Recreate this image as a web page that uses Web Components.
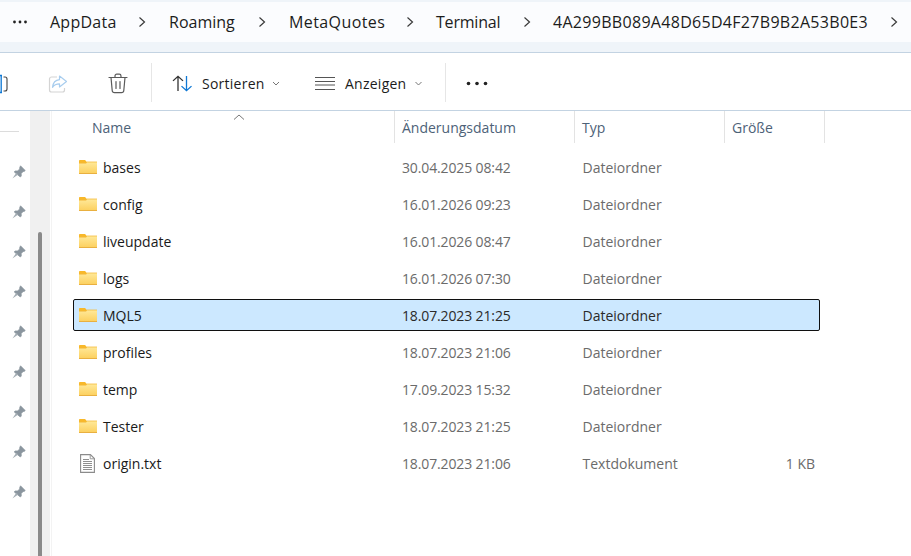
<!DOCTYPE html>
<html lang="de">
<head>
<meta charset="utf-8">
<title>Terminal</title>
<style>
  html, body { margin: 0; height: 100%; background: #fff; overflow: hidden; }
  body { font-family: "Noto Sans", "Open Sans", sans-serif; color: #1a1a1a; }
</style>
</head>
<body>
<explorer-window>
  <address-bar slot="address"></address-bar>
  <command-bar slot="commands"></command-bar>
  <nav-pane slot="nav"></nav-pane>
  <file-list slot="files"></file-list>
</explorer-window>

<script>
const FONT = '"Open Sans", "Noto Sans", sans-serif';

const ICONS = {
    folder: `<svg width="18" height="14" viewBox="0 0 18 14">
        <defs><linearGradient id="fg" x1="0" y1="0" x2="0" y2="1"><stop offset="0" stop-color="#ffe99a"/><stop offset="1" stop-color="#fccf5c"/></linearGradient></defs>
        <path d="M0 .8C0 .3.3 0 .8 0h4.700c.4 0 .7.1 1 .4L8 2H18v1.500H0z" fill="#f8b82a"/>
        <path d="M0 3.200h7l1.300-1.200H18v12H0z" fill="url(#fg)"/>
        <path d="M0 3.200h7l1.300-1.200H18" fill="none" stroke="#f4bb3c" stroke-width=".8"/>
        <path d="M0 13.500h18" stroke="#e9b040"/>
    </svg>`,
    text: `<svg width="15" height="19" viewBox="0 0 15 19" fill="none">
        <path d="M.6.6h9.800l4 4v13.800H.6z" fill="#fff" stroke="#8b8b8b" stroke-width="1.100"/>
        <path d="M10.200.8v4h4" stroke="#9a9a9a"/>
        <path d="M3 5.500h6M3 7.500h9M3 9.500h9M3 11.500h9M3 13.500h9M3 15.500h9" stroke="#8f8f8f"/>
    </svg>`,
    pin: `<svg width="14" height="14" viewBox="0 0 14 14">
        <path d="M8.500 .8l4.700 4.700-1.100 1-.9-.1-2 2.200.1 2.400-1 1L2.200 6.900l1-1 2.400.1 2.100-2.100-.1-1z" fill="#8a959e" stroke="#8a959e" stroke-width=".7" stroke-linejoin="round"/>
        <path d="M4.400 7.800L.4 13.600l5.800-4z" fill="#a3acb3"/>
    </svg>`
};

class ExplorerWindow extends HTMLElement {
    constructor() {
        super();
        this.attachShadow({ mode: 'open' });
        this.shadowRoot.innerHTML = `
            <style>
                :host {
                    display: grid;
                    grid-template-columns: 52px 1fr;
                    grid-template-rows: 53px 58px 1fr;
                    width: 911px;
                    height: 556px;
                    font-family: ${FONT};
                    background: #fff;
                    overflow: hidden;
                }
                .wide { grid-column: 1 / 3; min-width: 0; }
            </style>
            <div class="wide"><slot name="address"></slot></div>
            <div class="wide"><slot name="commands"></slot></div>
            <slot name="nav"></slot>
            <slot name="files"></slot>`;
    }
}

class AddressBar extends HTMLElement {
    constructor() {
        super();
        this.attachShadow({ mode: 'open' });
        const parts = [
            ['AppData', 67, .25, 0], ['Roaming', 68, 0, 0], ['MetaQuotes', 96, .4, 0],
            ['Terminal', 66, -.2, -1], ['4A299BB089A48D65D4F27B9B2A53B0E3', 316, .3, -1]
        ];
        const crumbs = parts.map(([name, w, ls, ml]) => `
            <span class="crumb" style="width:${w}px;letter-spacing:${ls}px;margin-left:${ml}px">${name}</span>
            <svg class="sep" width="52" height="12" viewBox="0 0 52 12" fill="none">
                <path d="M22.500 1.500l5 4.500-5 4.500" stroke="#3a3a3a" stroke-width="1.200"/>
            </svg>`).join('');
        this.shadowRoot.innerHTML = `
            <style>
                :host {
                    display: block;
                    height: 53px;
                    box-sizing: border-box;
                    background: #eff4f9;
                    border-bottom: 1px solid #c3d3e2;
                    padding-top: 2px;
                }
                .field {
                    height: 40px;
                    background: #fbfcfe;
                    display: flex;
                    align-items: center;
                    padding-left: 12px;
                    white-space: nowrap;
                }
                .dots { width: 38px; flex: none; }
                .crumb { flex: none; font-size: 16px; color: #1c1c1c; }
                .sep { flex: none; }
            </style>
            <div class="field">
                <svg class="dots" width="38" height="4" viewBox="0 0 38 4">
                    <g fill="#222"><circle cx="2.500" cy="2" r="1.400"/><circle cx="8" cy="2" r="1.400"/><circle cx="13.500" cy="2" r="1.400"/></g>
                </svg>
                ${crumbs}
            </div>`;
    }
}

class CommandBar extends HTMLElement {
    constructor() {
        super();
        this.attachShadow({ mode: 'open' });
        this.shadowRoot.innerHTML = `
            <style>
                :host {
                    display: flex;
                    align-items: center;
                    height: 58px;
                    box-sizing: border-box;
                    border-bottom: 1px solid #c3d3e2;
                    padding-top: 4px;
                    background: #fff;
                    overflow: hidden;
                    font-size: 14px;
                    color: #1c1c1c;
                }
                .slot { flex: none; display: flex; align-items: center; }
                .divider { flex: none; width: 1px; height: 39px; margin-bottom: 2px; background: #e6e6e6; }
                .label { width: 63px; white-space: nowrap; letter-spacing: .25px; }
                svg { flex: none; display: block; }
            </style>
            <div class="slot" style="width:48px">
                <svg width="10" height="20" viewBox="0 0 10 20" fill="none" style="margin-left:-2px">
                    <path d="M1 1.500h3M1 18.500h3M3.200 1.500v17" stroke="#0f78d4" stroke-width="1.300"/>
                    <path d="M5.500 3h1.500c1.200 0 2 .8 2 2v10c0 1.200-.8 2-2 2H5.500" stroke="#444" stroke-width="1.100"/>
                </svg>
            </div>
            <div class="slot" style="width:60px">
                <svg width="20" height="20" viewBox="0 0 20 20" fill="none">
                    <path d="M9 3H3.500C2.500 3 1.500 4 1.500 5v11c0 1 1 2 2 2h11c1 0 2-1 2-2v-2" stroke="#d4d4d4" stroke-width="1.200"/>
                    <path d="M11.500 2l7 5.500-7 5.500v-3.200c-3.500 0-5.500 1.200-7 3.500.5-4.500 3-7.200 7-7.600z" stroke="#a8cdee" stroke-width="1.200" stroke-linejoin="round"/>
                </svg>
            </div>
            <div class="slot" style="width:43px">
                <svg width="20" height="21" viewBox="0 0 20 21" fill="none" stroke="#5a5a5a" stroke-width="1.200" stroke-linecap="round">
                    <path d="M1 4.500h18M7 4.500V3c0-1 .8-1.800 1.800-1.800h2.400c1 0 1.800.8 1.800 1.800v1.500"/>
                    <path d="M3 4.500l1.200 13c.1 1.300 1 2.200 2.300 2.200h7c1.300 0 2.200-.9 2.300-2.200l1.200-13"/>
                    <path d="M8 8.500v7M12 8.500v7"/>
                </svg>
            </div>
            <div class="divider"></div>
            <div class="slot" style="width:50px;padding-left:20px;box-sizing:border-box">
                <svg width="21" height="17" viewBox="0 0 21 19" preserveAspectRatio="none" fill="none" stroke-width="1.300">
                    <path d="M6 18V1.500M1 6.500l5-5 5 5" stroke="#333"/>
                    <path d="M14.500 1v16.500M9.500 12.500l5 5 5-5" stroke="#0f78d4"/>
                </svg>
            </div>
            <span class="label">Sortieren</span>
            <svg width="50" height="6" viewBox="0 0 50 6" fill="none"><path d="M8 1l3 3 3-3" stroke="#777"/></svg>
            <svg width="20" height="13" viewBox="0 0 20 13" fill="none" stroke="#555"><path d="M0 .5h20M0 4.500h20M0 8h20M0 12.500h20"/></svg>
            <span class="label" style="margin-left:10px">Anzeigen</span>
            <svg width="37" height="6" viewBox="0 0 37 6" fill="none"><path d="M7.500 1l3 3 3-3" stroke="#777"/></svg>
            <div class="divider"></div>
            <svg style="margin-left:20px" width="22" height="5" viewBox="0 0 22 5"><g fill="#222"><circle cx="2.500" cy="2.500" r="1.800"/><circle cx="11" cy="2.500" r="1.800"/><circle cx="19.500" cy="2.500" r="1.800"/></g></svg>`;
    }
}

class NavPane extends HTMLElement {
    constructor() {
        super();
        this.attachShadow({ mode: 'open' });
        const pins = Array.from({ length: 9 }, () => `<li>${ICONS.pin}</li>`).join('');
        this.shadowRoot.innerHTML = `
            <style>
                :host {
                    display: grid;
                    grid-template-columns: 30px 20px 2px;
                    min-height: 0;
                    background: #fff;
                }
                .items { min-width: 0; }
                .rule { height: 1px; width: 19px; background: #dcdcdc; margin-top: 20px; }
                ul { list-style: none; margin: 20px 0 0; padding: 0; }
                li { height: 40px; display: flex; align-items: center; justify-content: center; padding-left: 7px; box-sizing: border-box; }
                li svg { display: block; }
                .track { background: #f0f0f0; padding: 121px 8px 0 8px; box-sizing: border-box; }
                .thumb { height: 100%; background: #8a8a8a; border-radius: 2px 2px 0 0; }
                .edge { border-right: 1px solid #f3f3f3; }
            </style>
            <div class="items"><div class="rule"></div><ul>${pins}</ul></div>
            <div class="track"><div class="thumb"></div></div>
            <div class="edge"></div>`;
    }
}

class FileRow extends HTMLElement {
    constructor() {
        super();
        this.attachShadow({ mode: 'open' });
    }
    connectedCallback() {
        const d = this.dataset;
        this.shadowRoot.innerHTML = `
            <style>
                :host {
                    display: grid;
                    grid-template-columns: 328px 180px 150px 89px;
                    align-items: center;
                    height: 32px;
                    box-sizing: border-box;
                    width: 747px;
                    border: 1px solid transparent;
                    border-radius: 2px;
                    font-size: 14px;
                    color: #6b6b6b;
                }
                :host([selected]) {
                    background: #cce8ff;
                    border-color: #101010;
                    color: #2a2a2a;
                }
                .name { display: flex; align-items: center; color: #1a1a1a; padding-left: 4px; }
                .icon { width: 25px; flex: none; }
                .date { letter-spacing: -.13px; }
                .type { padding-left: .5px; }
                .size { text-align: right; padding-right: 6px; }
            </style>
            <div class="name"><span class="icon"><slot name="icon"></slot></span><slot></slot></div>
            <div class="date">${d.date}</div>
            <div class="type">${d.type}</div>
            <div class="size">${d.size || ''}</div>`;
    }
}

class FileList extends HTMLElement {
    constructor() {
        super();
        this.attachShadow({ mode: 'open' });
        const files = [
            ['bases', '30.04.2025 08:42'], ['config', '16.01.2026 09:23'],
            ['liveupdate', '16.01.2026 08:47'], ['logs', '16.01.2026 07:30'],
            ['MQL5', '18.07.2023 21:25', true], ['profiles', '18.07.2023 21:06'],
            ['temp', '17.09.2023 15:32'], ['Tester', '18.07.2023 21:25']
        ];
        const rows = files.map(([name, date, sel]) => `
            <file-row data-date="${date}" data-type="Dateiordner" ${sel ? 'selected' : ''}>
                <span slot="icon" style="display:block;height:14px;padding-left:1px;margin-top:-2px">${ICONS.folder}</span>${name}
            </file-row>`).join('');
        this.shadowRoot.innerHTML = `
            <style>
                :host {
                    display: block;
                    min-width: 0;
                    background: #fff;
                    overflow: hidden;
                    position: relative;
                }
                .head {
                    display: grid;
                    grid-template-columns: 343px 180px 150px 100px;
                    height: 32px;
                    font-size: 14px;
                    color: #4d6278;
                }
                .head div {
                    display: flex;
                    align-items: center;
                    padding-left: 7px;
                    border-right: 1px solid #e3e3e3;
                    box-sizing: border-box;
                    height: 32px;
                }
                .head div:first-child { padding-left: 40px; }
                .caret { position: absolute; left: 181px; top: 3px; }
                .rows { display: flex; flex-direction: column; gap: 5px; padding: 8px 0 0 21px; }
            </style>
            <div class="head"><div>Name</div><div>Änderungsdatum</div><div>Typ</div><div>Größe</div></div>
            <svg class="caret" width="12" height="6" viewBox="0 0 12 6" fill="none"><path d="M1 5.500l5-4.500 5 4.500" stroke="#777"/></svg>
            <div class="rows">
                ${rows}
                <file-row data-date="18.07.2023 21:06" data-type="Textdokument" data-size="1 KB">
                    <span slot="icon" style="display:block;height:19px;padding-left:2px">${ICONS.text}</span>origin.txt
                </file-row>
            </div>`;
    }
}

customElements.define('explorer-window', ExplorerWindow);
customElements.define('address-bar', AddressBar);
customElements.define('command-bar', CommandBar);
customElements.define('nav-pane', NavPane);
customElements.define('file-row', FileRow);
customElements.define('file-list', FileList);
</script>
</body>
</html>
